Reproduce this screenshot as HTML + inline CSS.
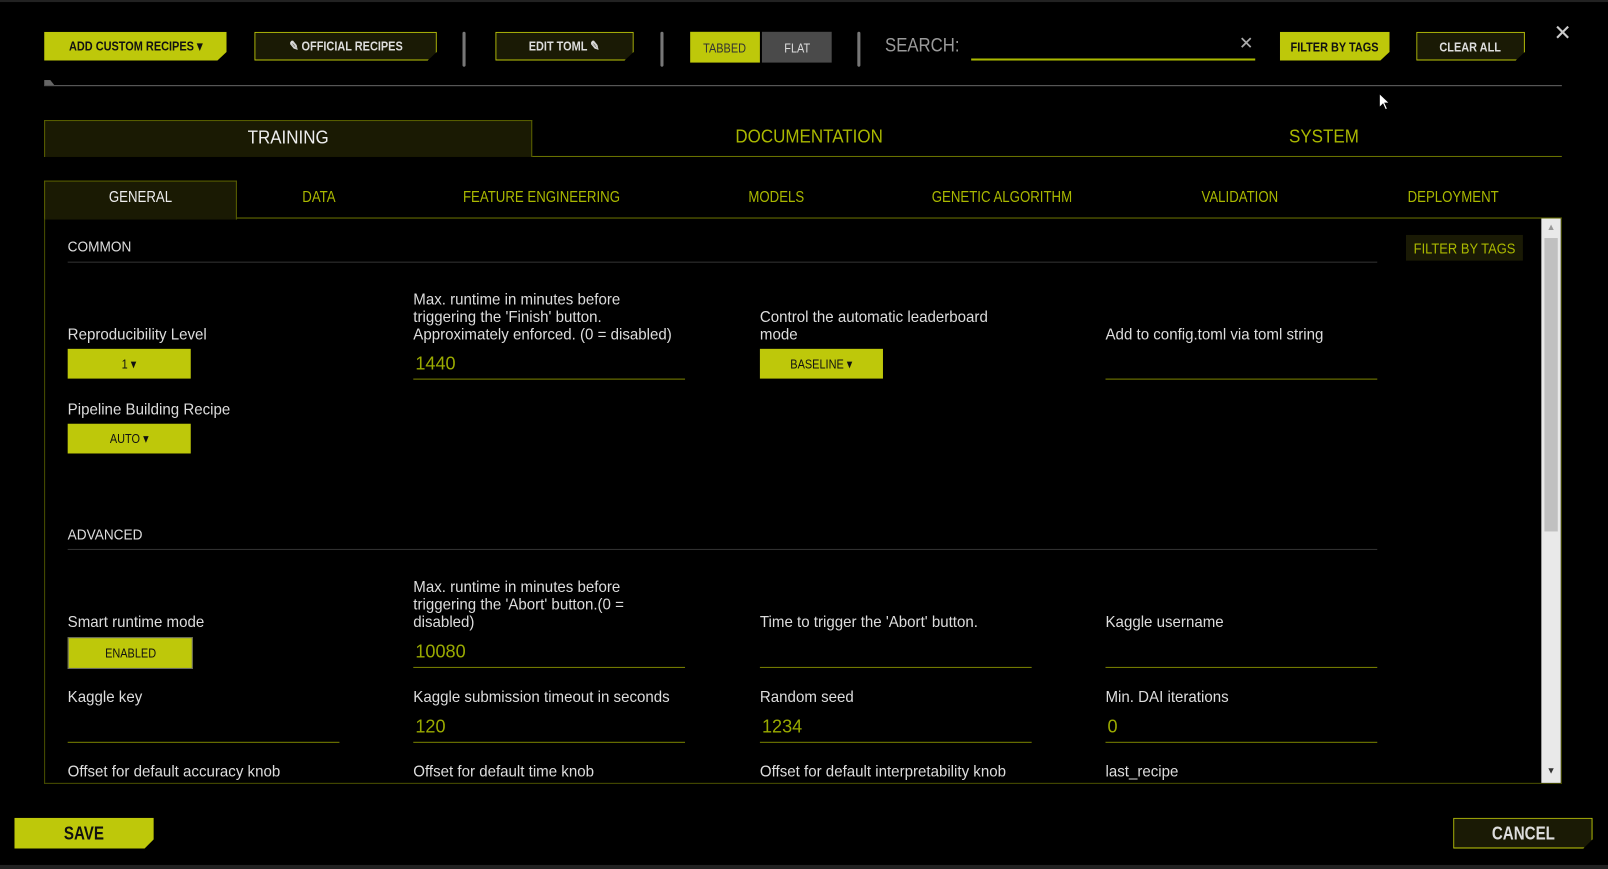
<!DOCTYPE html>
<html><head><meta charset="utf-8"><style>
html,body{margin:0;padding:0;background:#000;width:1608px;height:869px;overflow:hidden}
#w{position:absolute;left:0;top:0;width:1568px;height:847px;transform:scale(1.02551,1.026);transform-origin:0 0;font-family:"Liberation Sans",sans-serif;color:#ddd}
.a{position:absolute;box-sizing:border-box}
.c{display:inline-block;transform:scaleX(.82);white-space:nowrap}
.btn{display:flex;align-items:center;justify-content:center;font-size:13px;font-weight:bold;clip-path:polygon(0 0,100% 0,100% 70%,calc(100% - 9px) 100%,0 100%)}
.lime{background:#bec80a;color:#111}
.dark{background:#1a1a05;border:1.5px solid #bec80a;color:#ddd}
.sep{width:3px;height:34px;background:#777;border-radius:2px}
.t{font-size:15px;color:#ddd;white-space:nowrap}
.lbl{position:absolute;font-size:15px;color:#ddd;line-height:17px;white-space:nowrap;transform:scaleX(.98);transform-origin:0 0}
.inp{position:absolute;height:1px;background:#7a8200;width:265px}
.val{position:absolute;font-size:18px;color:#9aaa00;transform:scaleX(.98);transform-origin:0 0}
.dd{position:absolute;width:120px;height:29px;background:#bec80a;color:#111;font-size:13px;display:flex;align-items:center;justify-content:center}
.sub{position:absolute;top:184px;font-size:15px;color:#aab800;transform:translateX(-50%) scaleX(.86);white-space:nowrap}
.mt{position:absolute;top:123px;font-size:18px;color:#aab800;transform:translateX(-50%) scaleX(.92);white-space:nowrap}
</style></head><body><div id="w">
<div class="a" style="left:0;top:0;width:1568px;height:2px;background:#222"></div>
<div class="a" style="left:0;top:843px;width:1568px;height:4px;background:#222"></div>
<div class="a btn lime" style="left:43px;top:31px;width:178px;height:28px"><span class="c">ADD CUSTOM RECIPES ▾</span></div>
<div class="a btn dark" style="left:248px;top:31px;width:178px;height:28px"><span class="c">✎ OFFICIAL RECIPES</span></div>
<div class="a sep" style="left:451px;top:31px"></div>
<div class="a btn dark" style="left:483px;top:31px;width:135px;height:28px"><span class="c">EDIT TOML ✎</span></div>
<div class="a sep" style="left:644px;top:31px"></div>
<div class="a" style="left:673px;top:31px;width:68px;height:30px;background:#bec80a;color:#333;font-size:13px;display:flex;align-items:center;justify-content:center"><span class="c">TABBED</span></div>
<div class="a" style="left:743px;top:31px;width:68px;height:30px;background:#4a4a4a;color:#ddd;font-size:13px;display:flex;align-items:center;justify-content:center"><span class="c">FLAT</span></div>
<div class="a sep" style="left:836px;top:31px"></div>
<div class="a" style="left:863px;top:34px;font-size:19px;color:#9a9a9a;transform:scaleX(.86);transform-origin:0 0">SEARCH:</div>
<div class="a" style="left:947px;top:57px;width:277px;height:1.5px;background:#aab800"></div>
<div class="a" style="left:1208px;top:33px;font-size:17px;color:#aaa">✕</div>
<div class="a btn lime" style="left:1248px;top:31px;width:107px;height:28px"><span class="c">FILTER BY TAGS</span></div>
<div class="a btn dark" style="left:1381px;top:31px;width:106px;height:28px"><span class="c">CLEAR ALL</span></div>
<div class="a" style="left:1515px;top:20px;font-size:21px;color:#ccc">✕</div>
<div class="a" style="left:43px;top:83px;width:1480px;height:1px;background:#666"></div>
<div class="a" style="left:43px;top:78px;width:10px;height:5px;background:#666;clip-path:polygon(0 0,60% 0,100% 100%,0 100%)"></div>
<svg class="a" style="left:1344px;top:90px" width="12" height="18"><path d="M1 1 L1 15 L4.5 11.5 L7 17 L9 16 L6.5 10.5 L11 10.5 Z" fill="#fff" stroke="#000" stroke-width="1"/></svg>

<div class="a" style="left:43px;top:117px;width:476px;height:36px;background:#1a1a03;border:1px solid #5a6000;border-bottom:none"></div>
<div class="a" style="left:519px;top:152px;width:1004px;height:1px;background:#6a7200"></div>
<div class="mt" style="left:281px;top:124px;color:#eee">TRAINING</div>
<div class="mt" style="left:789px">DOCUMENTATION</div>
<div class="mt" style="left:1291px">SYSTEM</div>

<div class="a" style="left:43px;top:176px;width:188px;height:38px;background:#1a1a03;border:1px solid #5a6000;border-bottom:none"></div>
<div class="a" style="left:231px;top:212px;width:1292px;height:1px;background:#6a7200"></div>
<div class="sub" style="left:137px;color:#eee">GENERAL</div>
<div class="sub" style="left:311px">DATA</div>
<div class="sub" style="left:528px">FEATURE ENGINEERING</div>
<div class="sub" style="left:757px">MODELS</div>
<div class="sub" style="left:977px">GENETIC ALGORITHM</div>
<div class="sub" style="left:1209px">VALIDATION</div>
<div class="sub" style="left:1417px">DEPLOYMENT</div>

<div class="a" style="left:43px;top:213px;width:1480px;height:551px;border:1px solid #4a5000;border-top:none;overflow:hidden">
<div class="a" style="left:1459px;top:0;width:19px;height:551px;background:#e9e9e9"></div>
<div class="a" style="left:1462px;top:19px;width:13px;height:286px;background:#c0c0c0"></div>
<div class="a" style="left:1464px;top:3px;font-size:9px;color:#999">▲</div>
<div class="a" style="left:1464px;top:533px;font-size:9px;color:#333">▼</div>
</div>

<div class="a t" style="left:66px;top:232px;font-size:14px;transform:scaleX(.95);transform-origin:0 0">COMMON</div>
<div class="a" style="left:66px;top:255px;width:1277px;height:1px;background:#333"></div>
<div class="a" style="left:1371px;top:229px;width:114px;height:25px;background:#1a1a05;color:#aab800;font-size:14px;display:flex;align-items:center;justify-content:center"><span class="c" style="transform:scaleX(.9)">FILTER BY TAGS</span></div>

<div class="lbl" style="left:66px;top:318px">Reproducibility Level</div>
<div class="dd" style="left:66px;top:340px"><span class="c">1 ▾</span></div>
<div class="lbl" style="left:66px;top:391px">Pipeline Building Recipe</div>
<div class="dd" style="left:66px;top:413px"><span class="c">AUTO ▾</span></div>
<div class="lbl" style="left:403px;top:284px">Max. runtime in minutes before<br>triggering the 'Finish' button.<br>Approximately enforced. (0 = disabled)</div>
<div class="val" style="left:405px;top:344px">1440</div>
<div class="inp" style="left:403px;top:369px"></div>
<div class="lbl" style="left:741px;top:301px">Control the automatic leaderboard<br>mode</div>
<div class="dd" style="left:741px;top:340px"><span class="c">BASELINE ▾</span></div>
<div class="lbl" style="left:1078px;top:318px">Add to config.toml via toml string</div>
<div class="inp" style="left:1078px;top:369px"></div>

<div class="a t" style="left:66px;top:513px;font-size:14px;transform:scaleX(.95);transform-origin:0 0">ADVANCED</div>
<div class="a" style="left:66px;top:535px;width:1277px;height:1px;background:#333"></div>

<div class="lbl" style="left:66px;top:598px">Smart runtime mode</div>
<div class="dd" style="left:66px;top:621px;border:1px solid #666"><span class="c">ENABLED</span></div>
<div class="lbl" style="left:403px;top:564px">Max. runtime in minutes before<br>triggering the 'Abort' button.(0 =<br>disabled)</div>
<div class="val" style="left:405px;top:625px">10080</div>
<div class="inp" style="left:403px;top:650px"></div>
<div class="lbl" style="left:741px;top:598px">Time to trigger the 'Abort' button.</div>
<div class="inp" style="left:741px;top:650px"></div>
<div class="lbl" style="left:1078px;top:598px">Kaggle username</div>
<div class="inp" style="left:1078px;top:650px"></div>

<div class="lbl" style="left:66px;top:671px">Kaggle key</div>
<div class="inp" style="left:66px;top:723px"></div>
<div class="lbl" style="left:403px;top:671px">Kaggle submission timeout in seconds</div>
<div class="val" style="left:405px;top:698px">120</div>
<div class="inp" style="left:403px;top:723px"></div>
<div class="lbl" style="left:741px;top:671px">Random seed</div>
<div class="val" style="left:743px;top:698px">1234</div>
<div class="inp" style="left:741px;top:723px"></div>
<div class="lbl" style="left:1078px;top:671px">Min. DAI iterations</div>
<div class="val" style="left:1080px;top:698px">0</div>
<div class="inp" style="left:1078px;top:723px"></div>

<div class="lbl" style="left:66px;top:744px">Offset for default accuracy knob</div>
<div class="lbl" style="left:403px;top:744px">Offset for default time knob</div>
<div class="lbl" style="left:741px;top:744px">Offset for default interpretability knob</div>
<div class="lbl" style="left:1078px;top:744px">last_recipe</div>

<div class="a btn lime" style="left:14px;top:797px;width:136px;height:30px;font-size:18px"><span class="c">SAVE</span></div>
<div class="a btn dark" style="left:1417px;top:797px;width:136px;height:30px;font-size:18px"><span class="c">CANCEL</span></div>
</div></body></html>
